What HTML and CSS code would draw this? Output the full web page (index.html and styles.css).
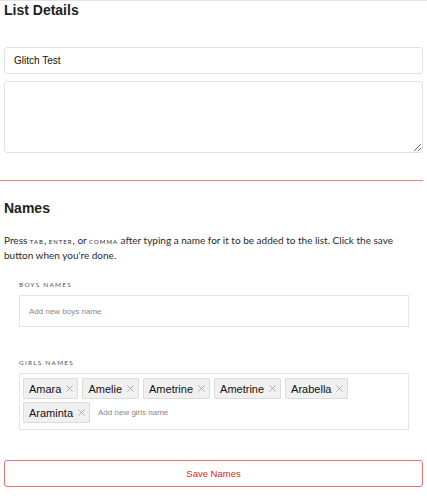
FILE: index.html
```html
<!DOCTYPE html>
<html lang="en">
<head>
<meta charset="utf-8">
<title>List Details</title>
<link rel="stylesheet" href="styles.css">
</head>
<body>
<div class="page">
  <section class="details">
    <h2 class="heading">List Details</h2>
    <div class="fields">
      <input class="field" type="text" value="Glitch Test">
      <textarea class="field area"></textarea>
    </div>
  </section>
  <hr class="divider">
  <section class="names">
    <h2 class="heading">Names</h2>
    <p class="hint"><span>Press</span> <kbd class="key">tab</kbd><span>,</span> <kbd class="key">enter</kbd><span>, or</span> <kbd class="key">comma</kbd> <span>after typing a name for it to be added to the list. Click the save</span> <span>button when you're done.</span></p>
    <div class="group">
      <label class="label">Boys names</label>
      <div class="tagbox">
        <span class="placeholder">Add new boys name</span>
      </div>
    </div>
    <div class="group">
      <label class="label">Girls names</label>
      <div class="tagbox filled">
        <span class="tag">Amara<svg class="x" viewBox="0 0 8 8"><path d="M0.5 0.5L7.5 7.5M7.5 0.5L0.5 7.5"/></svg></span>
        <span class="tag">Amelie<svg class="x" viewBox="0 0 8 8"><path d="M0.5 0.5L7.5 7.5M7.5 0.5L0.5 7.5"/></svg></span>
        <span class="tag">Ametrine<svg class="x" viewBox="0 0 8 8"><path d="M0.5 0.5L7.5 7.5M7.5 0.5L0.5 7.5"/></svg></span>
        <span class="tag">Ametrine<svg class="x" viewBox="0 0 8 8"><path d="M0.5 0.5L7.5 7.5M7.5 0.5L0.5 7.5"/></svg></span>
        <span class="tag">Arabella<svg class="x" viewBox="0 0 8 8"><path d="M0.5 0.5L7.5 7.5M7.5 0.5L0.5 7.5"/></svg></span>
        <span class="tag">Araminta<svg class="x" viewBox="0 0 8 8"><path d="M0.5 0.5L7.5 7.5M7.5 0.5L0.5 7.5"/></svg></span>
        <span class="placeholder">Add new girls name</span>
      </div>
    </div>
    <button class="save" type="button">Save Names</button>
  </section>
</div>
</body>
</html>
```
FILE: styles.css
```css
* { box-sizing: border-box; }

html, body {
  margin: 0;
  background: #fff;
}

body {
  border-top: 1px solid #e4e4e4;
  font-family: "Liberation Sans", Arial, sans-serif;
  color: #222;
}

.page {
  padding: 0 4px;
}

.heading {
  margin: 0;
  font-family: "Liberation Sans", Arial, sans-serif;
  font-weight: bold;
  font-size: 14px;
  line-height: 18px;
  color: #222;
}

.fields {
  display: flex;
  flex-direction: column;
  gap: 7px;
  margin-top: 28px;
}

.field {
  display: block;
  width: 100%;
  margin: 0;
  border: 1px solid #e2e2e2;
  border-radius: 3px;
  font-family: "Liberation Sans", Arial, sans-serif;
  font-size: 10px;
  color: #111;
  background: #fff;
}

input.field {
  height: 27px;
  padding: 0 9px;
}

.area {
  height: 72px;
  resize: vertical;
}

.divider {
  margin: 27px 0 0 -4px;
  border: 0;
  border-top: 1px solid #f08282;
  height: 0;
}

.names .heading {
  margin-top: 18px;
}

.hint {
  margin: 16px 0 0;
  font-family: "Lato", "Open Sans", sans-serif;
  font-size: 10px;
  line-height: 15px;
  color: #2a2a2a;
}

/* keyboard key names, set small and spaced out */
.key {
  display: inline-block;
  font-family: inherit;
  text-transform: uppercase;
  font-size: 6px;
  line-height: 10px;
  letter-spacing: 1px;
}

.group {
  padding: 0 14px 0 15px;
}

.names .group:first-of-type {
  margin-top: 17px;
}

.group + .group {
  margin-top: 31px;
}

.label {
  display: block;
  font-family: "Lato", "Open Sans", sans-serif;
  font-size: 6.5px;
  line-height: 10px;
  letter-spacing: 1.2px;
  text-transform: uppercase;
  color: #555;
  margin-bottom: 5px;
}

.tagbox {
  display: flex;
  flex-wrap: wrap;
  align-items: center;
  min-height: 32px;
  border: 1px solid #e4e4e4;
  padding: 0 9px;
}

.tagbox.filled {
  padding: 4px 3px 6px;
  gap: 3px 4px;
}

.placeholder {
  font-size: 8px;
  color: #888;
}

.filled .placeholder {
  margin-left: 4px;
}

.tag {
  display: inline-flex;
  align-items: center;
  height: 21px;
  padding: 0 4px 0 5px;
  background: #f0f0f0;
  border: 1px solid #dcdcdc;
  border-radius: 1px;
  font-size: 11px;
  color: #111;
}

.x {
  width: 7px;
  height: 7px;
  margin-left: 5px;
  fill: none;
  stroke: #a3a3a3;
  stroke-width: 1;
}

.save {
  display: block;
  width: 100%;
  height: 27px;
  margin-top: 30px;
  background: #fff;
  border: 1px solid #ec7070;
  border-radius: 3px;
  font-family: "Liberation Sans", Arial, sans-serif;
  font-size: 9.5px;
  color: #d8262b;
}
```
